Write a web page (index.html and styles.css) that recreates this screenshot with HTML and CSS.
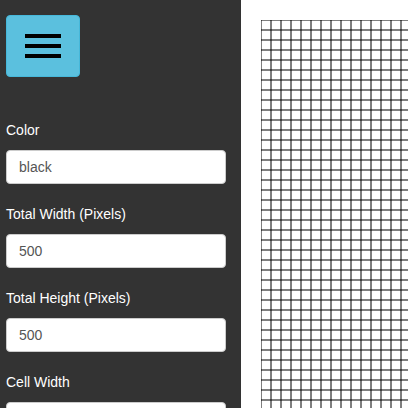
FILE: index.html
```html
<!DOCTYPE html>
<html>
<head>
<meta charset="utf-8">
<link rel="stylesheet" href="styles.css">
</head>
<body>
<aside class="sidebar">
  <button class="menu-btn" type="button" aria-label="Menu">
    <span class="bar"></span>
    <span class="bar"></span>
    <span class="bar"></span>
  </button>
  <form class="settings">
    <div class="form-group">
      <label class="label">Color</label>
      <input class="input" type="text" value="black">
    </div>
    <div class="form-group">
      <label class="label">Total Width (Pixels)</label>
      <input class="input" type="text" value="500">
    </div>
    <div class="form-group">
      <label class="label">Total Height (Pixels)</label>
      <input class="input" type="text" value="500">
    </div>
    <div class="form-group">
      <label class="label">Cell Width</label>
      <input class="input" type="text" value="10">
    </div>
  </form>
</aside>
<main class="canvas">
  <div class="grid"></div>
</main>
</body>
</html>
```
FILE: styles.css
```css
html, body {
  margin: 0;
  padding: 0;
}
body {
  display: flex;
  height: 408px;
  overflow: hidden;
  font-family: "Liberation Sans", Arial, sans-serif;
  font-size: 14px;
  background: #fff;
}
.sidebar {
  width: 241px;
  flex: 0 0 241px;
  box-sizing: border-box;
  background: #333;
  padding: 15px 15px 0 6px;
}
.menu-btn {
  width: 74px;
  height: 62px;
  box-sizing: border-box;
  background: #5bc0de;
  border: 1px solid #46b8da;
  border-radius: 4px;
  padding: 0;
  display: flex;
  flex-direction: column;
  align-items: center;
  justify-content: center;
  gap: 6px;
}
.bar {
  display: block;
  width: 36px;
  height: 4px;
  background: #000;
}
.settings {
  margin-top: 43px;
}
.form-group {
  margin-bottom: 20px;
}
.label {
  display: block;
  color: #fff;
  line-height: 20px;
  margin-bottom: 10px;
}
.input {
  display: block;
  width: 220px;
  height: 34px;
  box-sizing: border-box;
  padding: 6px 12px;
  border: 1px solid #ccc;
  border-radius: 4px;
  background: #fff;
  color: #555;
  font-family: "Liberation Sans", Arial, sans-serif;
  font-size: 14px;
  outline: none;
}
.canvas {
  flex: 1;
  padding: 20px 0 0 20px;
  overflow: hidden;
}
.grid {
  width: 500px;
  height: 500px;
  background-image:
    linear-gradient(to right, rgba(0,0,0,.5) 0 1px, transparent 1px 9px, rgba(0,0,0,.5) 9px 10px),
    linear-gradient(to bottom, rgba(0,0,0,.5) 0 1px, transparent 1px 9px, rgba(0,0,0,.5) 9px 10px);
  background-size: 10px 10px;
}
```
